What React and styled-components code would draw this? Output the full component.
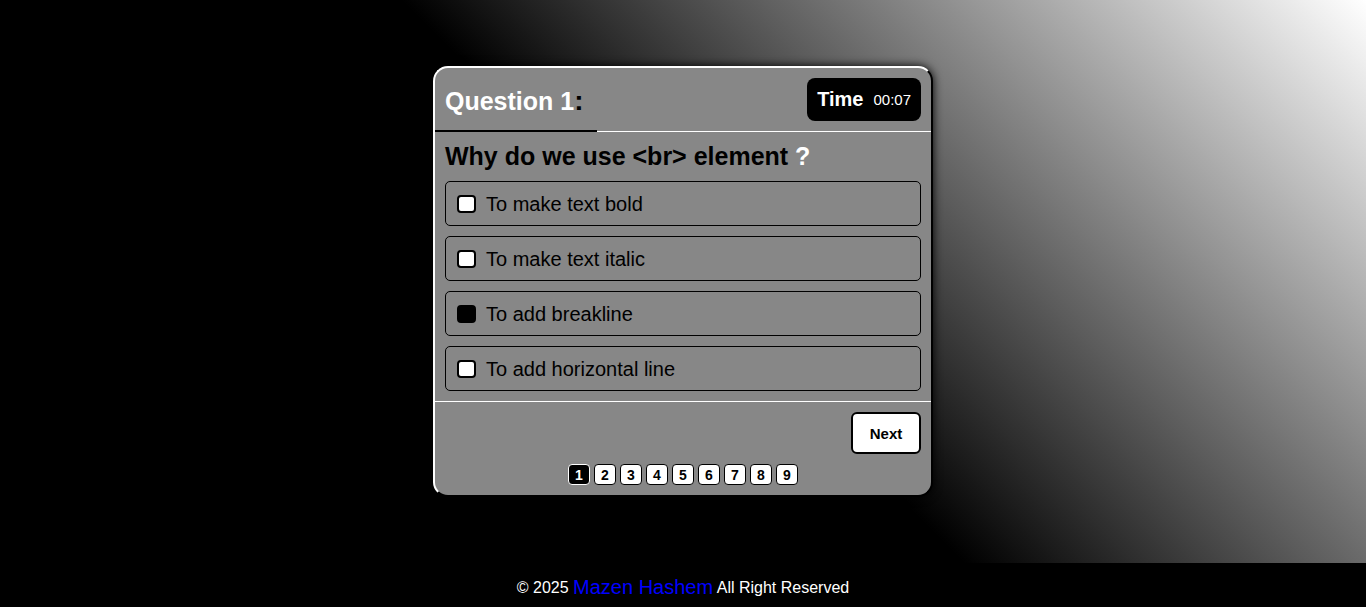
import React from "react";
import styled, { createGlobalStyle } from "styled-components";

const Global = createGlobalStyle`
  * { box-sizing: border-box; }
  html, body { margin: 0; padding: 0; background: #000; }
  body { font-family: "Liberation Sans", Arial, sans-serif; }
`;

const Page = styled.div`
  display: flex;
  flex-direction: column;
  min-height: 607px;
`;

const Stage = styled.main`
  height: 563px;
  display: flex;
  align-items: center;
  justify-content: center;
  background: linear-gradient(45deg, #000 50%, #fff);
`;

const Card = styled.section`
  width: 500px;
  background: #878787;
  border: 2px solid;
  border-color: #fff #000 #000 #fff;
  border-radius: 15px;
  box-shadow: 0 0 10px #000;
  overflow: hidden;
`;

const Header = styled.header`
  position: relative;
  display: flex;
  align-items: center;
  justify-content: space-between;
  padding: 10px 10px;
  border-bottom: 1px solid #fff;
`;

const Progress = styled.div`
  position: absolute;
  left: 0;
  bottom: -1px;
  height: 2px;
  background: #000;
`;

const Title = styled.h1`
  margin: 2px 0 0;
  font-size: 25px;
  font-weight: bold;
  color: #fff;
`;

const Colon = styled.span`
  color: #000;
  font-size: 28px;
`;

const Timer = styled.div`
  display: flex;
  align-items: center;
  gap: 10px;
  height: 43px;
  padding: 0 10px;
  background: #000;
  color: #fff;
  border-radius: 8px;
`;

const TimerLabel = styled.span`
  font-size: 20px;
  font-weight: bold;
`;

const TimerValue = styled.span`
  font-size: 15px;
`;

const Body = styled.div`
  display: flex;
  flex-direction: column;
  gap: 10px;
  padding: 10px 10px;
  border-bottom: 1px solid #fff;
`;

const QuestionText = styled.h2`
  margin: 0;
  font-size: 25px;
  font-weight: bold;
  color: #000;
`;

const Mark = styled.span`
  color: #fff;
`;

const Option = styled.label`
  display: flex;
  align-items: center;
  gap: 10px;
  height: 45px;
  padding: 1px 11px 0;
  border: 1px solid #000;
  border-radius: 5px;
  font-size: 20px;
  color: #000;
`;

const Box = styled.span`
  width: 19px;
  height: 18px;
  border: 2px solid #000;
  border-radius: 4px;
  background: ${(p) => (p.$checked ? "#000" : "#fff")};
`;

const Footer = styled.div`
  display: flex;
  flex-direction: column;
  gap: 10px;
  padding: 10px 10px 10px 10px;
`;

const NextRow = styled.div`
  display: flex;
  justify-content: flex-end;
`;

const NextButton = styled.button`
  width: 70px;
  height: 42px;
  background: #fff;
  border: 2px solid #000;
  border-radius: 6px;
  font-family: "Liberation Sans", Arial, sans-serif;
  font-size: 15px;
  font-weight: bold;
  color: #000;
`;

const Pager = styled.div`
  display: flex;
  justify-content: center;
  gap: 4px;
`;

const PageBtn = styled.span`
  width: 22px;
  height: 21px;
  display: flex;
  align-items: center;
  justify-content: center;
  border: 1px solid ${(p) => (p.$active ? "#fff" : "#000")};
  border-radius: 4px;
  background: ${(p) => (p.$active ? "#000" : "#fff")};
  color: ${(p) => (p.$active ? "#fff" : "#000")};
  font-size: 14px;
  font-weight: bold;
`;

const SiteFooter = styled.footer`
  height: 44px;
  display: flex;
  align-items: center;
  justify-content: center;
  padding-top: 5px;
  background: #000;
  color: #fff;
  font-size: 16px;
  white-space: pre;
`;

const Author = styled.span`
  color: #0000ff;
  font-size: 20px;
`;

const options = [
  { text: "To make text bold" },
  { text: "To make text italic" },
  { text: "To add breakline", checked: true },
  { text: "To add horizontal line" },
];

export default function App() {
  return (
    <Page>
      <Global />
      <Stage>
        <Card>
          <Header>
            <Title>
              Question 1<Colon>:</Colon>
            </Title>
            <Timer>
              <TimerLabel>Time</TimerLabel>
              <TimerValue>00:07</TimerValue>
            </Timer>
            <Progress style={{ width: "162px" }} />
          </Header>
          <Body>
            <QuestionText>
              Why do we use &lt;br&gt; element <Mark>?</Mark>
            </QuestionText>
            {options.map((o) => (
              <Option key={o.text}>
                <Box $checked={o.checked} />
                {o.text}
              </Option>
            ))}
          </Body>
          <Footer>
            <NextRow>
              <NextButton>Next</NextButton>
            </NextRow>
            <Pager>
              {[1, 2, 3, 4, 5, 6, 7, 8, 9].map((n) => (
                <PageBtn key={n} $active={n === 1}>
                  {n}
                </PageBtn>
              ))}
            </Pager>
          </Footer>
        </Card>
      </Stage>
      <SiteFooter>
        {"© 2025 "}
        <Author>Mazen Hashem</Author>
        {" All Right Reserved"}
      </SiteFooter>
    </Page>
  );
}
